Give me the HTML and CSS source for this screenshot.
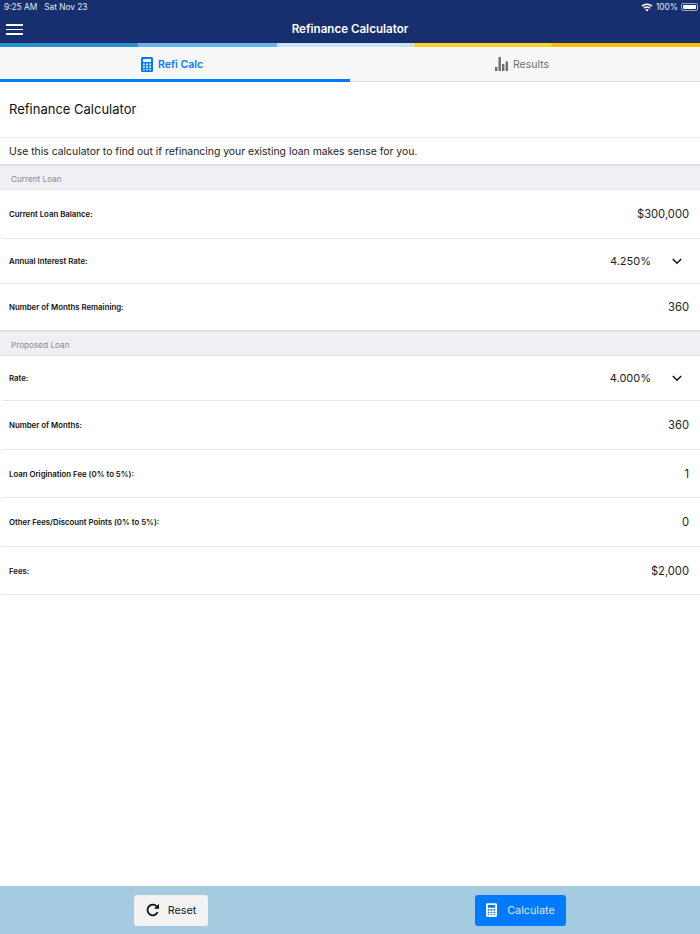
FILE: index.html
```html
<!DOCTYPE html>
<html lang="en">
<head>
<meta charset="utf-8">
<title>Refinance Calculator</title>
<link rel="stylesheet" href="styles.css">
</head>
<body>
<div class="app">
  <header class="header">
    <div class="status">
      <span class="status-left"><span>9:25 AM</span><span>Sat Nov 23</span></span>
      <span class="status-right">
        <svg class="wifi" width="12" height="9" viewBox="0 0 12 9"><path d="M6 8.600 4.300 6.700a2.500 2.500 0 0 1 3.400 0zM3.400 5.800 2.400 4.700a5.300 5.300 0 0 1 7.200 0L8.600 5.800a3.900 3.900 0 0 0-5.200 0zM1.500 3.800.4 2.700a8.200 8.200 0 0 1 11.200 0l-1.100 1.100a6.700 6.700 0 0 0-9 0z" fill="#fff"/></svg>
        <span>100%</span>
        <span class="battery"><span class="battery-fill"></span></span>
      </span>
    </div>
    <div class="titlebar">
      <span class="burger"><i></i><i></i><i></i></span>
      <span class="apptitle">Refinance Calculator</span>
    </div>
  </header>
  <div class="stripe"><i class="s1"></i><i class="s2"></i><i class="s3"></i><i class="s4"></i><i class="s5"></i></div>
  <nav class="tabs">
    <div class="tab active">
      <svg width="12" height="15" viewBox="0 0 12 15"><path fill-rule="evenodd" d="M1.500 0h9A1.500 1.500 0 0 1 12 1.500v12a1.500 1.500 0 0 1-1.500 1.500h-9A1.500 1.500 0 0 1 0 13.500v-12A1.500 1.500 0 0 1 1.500 0zM2 2v3h8V2zM2 6.500v1.700h1.800V6.500zM5.100 6.500v1.700h1.800V6.500zM8.200 6.500v1.700H10V6.500zM2 9.300V11h1.800V9.300zM5.100 9.300V11h1.800V9.300zM8.200 9.300V11H10V9.300zM2 12v1.300h1.800V12zM5.100 12v1.300h1.800V12zM8.200 12v1.300H10V12z" fill="#007aff"/></svg>
      <span>Refi Calc</span>
    </div>
    <div class="tab">
      <svg width="13" height="14" viewBox="0 0 13 14"><path d="M0 10h2.400v4H0zM3.500 0h2.400v14H3.500zM7 7h2.400v7H7zM10.600 4.500H13V14h-2.400z" fill="#6f6f6f"/></svg>
      <span>Results</span>
    </div>
  </nav>
  <main class="content">
    <h1 class="page-title">Refinance Calculator</h1>
    <p class="intro">Use this calculator to find out if refinancing your existing loan makes sense for you.</p>
    <div class="section-head">Current Loan</div>
    <div class="row h49"><span class="label">Current Loan Balance:</span><span class="value">$300,000</span></div>
    <div class="row h45"><span class="label">Annual Interest Rate:</span><span class="value select">4.250%<svg class="chev" width="10" height="7" viewBox="0 0 10 7"><path d="M.8 1 5 5.200 9.200 1" fill="none" stroke="#111" stroke-width="1.500"/></svg></span></div>
    <div class="row h48 last"><span class="label">Number of Months Remaining:</span><span class="value">360</span></div>
    <div class="section-head">Proposed Loan</div>
    <div class="row h45"><span class="label">Rate:</span><span class="value select">4.000%<svg class="chev" width="10" height="7" viewBox="0 0 10 7"><path d="M.8 1 5 5.200 9.200 1" fill="none" stroke="#111" stroke-width="1.500"/></svg></span></div>
    <div class="row h49"><span class="label">Number of Months:</span><span class="value">360</span></div>
    <div class="row h48"><span class="label">Loan Origination Fee (0% to 5%):</span><span class="value">1</span></div>
    <div class="row h49"><span class="label">Other Fees/Discount Points (0% to 5%):</span><span class="value">0</span></div>
    <div class="row h48"><span class="label">Fees:</span><span class="value">$2,000</span></div>
  </main>
  <footer class="footer">
    <button class="btn reset">
      <svg width="14" height="14" viewBox="0 0 14 14"><path d="M11.600 9.200A5.300 5.300 0 1 1 10.700 3.400" fill="none" stroke="#111" stroke-width="1.800"/><path d="M13 .8v5H8z" fill="#111"/></svg>
      <span>Reset</span>
    </button>
    <button class="btn calc">
      <svg width="11" height="14" viewBox="0 0 12 15"><path fill-rule="evenodd" d="M1.500 0h9A1.500 1.500 0 0 1 12 1.500v12a1.500 1.500 0 0 1-1.500 1.500h-9A1.500 1.500 0 0 1 0 13.500v-12A1.500 1.500 0 0 1 1.500 0zM2 2v3h8V2zM2 6.500v1.700h1.800V6.500zM5.100 6.500v1.700h1.800V6.500zM8.200 6.500v1.700H10V6.500zM2 9.300V11h1.800V9.300zM5.100 9.300V11h1.800V9.300zM8.200 9.300V11H10V9.300zM2 12v1.300h1.800V12zM5.100 12v1.300h1.800V12zM8.200 12v1.300H10V12z" fill="#fff"/></svg>
      <span>Calculate</span>
    </button>
  </footer>
</div>
</body>
</html>
```
FILE: styles.css
```css
* { box-sizing: border-box; }
html, body { margin: 0; padding: 0; }
body { font-family: Inter, "Liberation Sans", sans-serif; color: #111; background: #fff; }
.app { width: 700px; height: 934px; display: flex; flex-direction: column; overflow: hidden; }

.header { height: 43px; background: #172f6e; color: #fff; flex: none; }
.status { height: 14px; display: flex; justify-content: space-between; align-items: center; padding: 0 2px 0 4px; font-size: 8.300px; color: #e4e8f2; }
.status-left { display: flex; gap: 7px; }
.status-right { display: flex; align-items: center; gap: 3px; }
.battery { width: 17px; height: 8px; border: 1px solid #9aa6c4; border-radius: 2px; padding: 1px; display: block; }
.battery-fill { display: block; height: 100%; background: #fff; border-radius: 1px; }
.titlebar { height: 29px; display: flex; align-items: center; justify-content: center; position: relative; }
.burger { position: absolute; left: 6px; top: 10px; width: 17px; display: flex; flex-direction: column; gap: 3px; }
.burger i { display: block; height: 1.500px; background: #fff; }
.apptitle { font-size: 11.600px; font-weight: 600; }

.stripe { display: flex; height: 4px; flex: none; }
.stripe i { display: block; }
.s1 { width: 138px; background: #2a8fcf; }
.s2 { width: 139px; background: #69b6ee; }
.s3 { width: 137px; background: #c6e3fa; }
.s4 { width: 138px; background: #fdd32a; }
.s5 { width: 148px; background: #fcbc04; }

.tabs { display: flex; height: 35px; background: #f8f8f8; flex: none; }
.tab { flex: 1; display: flex; align-items: center; justify-content: center; gap: 5px; padding-right: 6px; font-size: 10.500px; color: #6f6f6f; border-bottom: 1px solid #dcdce0; }
.tab.active { color: #007aff; font-weight: 600; border-bottom: 3px solid #007aff; padding-top: 2px; }

.content { flex: 1; }
.page-title { margin: 0; height: 56px; padding: 0 9px 2px; display: flex; align-items: center; font-size: 13px; font-weight: 400; color: #111; border-bottom: 1px solid #ececec; }
.intro { margin: 0; height: 28px; padding: 0 9px; display: flex; align-items: center; font-size: 10.400px; color: #222; border-bottom: 2px solid #e0e0e3; }
.section-head { height: 24px; background: #efeff4; border-bottom: 1px solid #e2e2e6; padding: 2px 11px 0; display: flex; align-items: center; font-size: 8.200px; color: #8a8a8e; }
.row { margin-left: 2px; display: flex; align-items: center; justify-content: space-between; padding: 0 11px 0 7px; border-bottom: 1px solid #e6e6e8; }
.row.last { margin-left: 0; padding-left: 9px; border-bottom: 2px solid #e0e0e3; }
.h45 { height: 45px; }
.h48 { height: 48px; }
.h49 { height: 49px; }
.label { font-size: 7.800px; font-weight: 600; color: #111; }
.value { font-size: 11.200px; color: #222; display: flex; align-items: center; }
.select { gap: 21px; padding-right: 7px; font-size: 11px; }

.footer { height: 48px; background: #a5cbe0; flex: none; display: flex; align-items: center; padding-left: 134px; gap: 267px; }
.btn { height: 31px; border: 0; border-radius: 3px; font-family: inherit; font-size: 10.800px; display: flex; align-items: center; justify-content: center; padding: 0; }
.reset { width: 74px; background: #f2f2f2; color: #222; gap: 8px; }
.calc { width: 91px; background: #007aff; color: #dbe9fb; gap: 10px; }
```
